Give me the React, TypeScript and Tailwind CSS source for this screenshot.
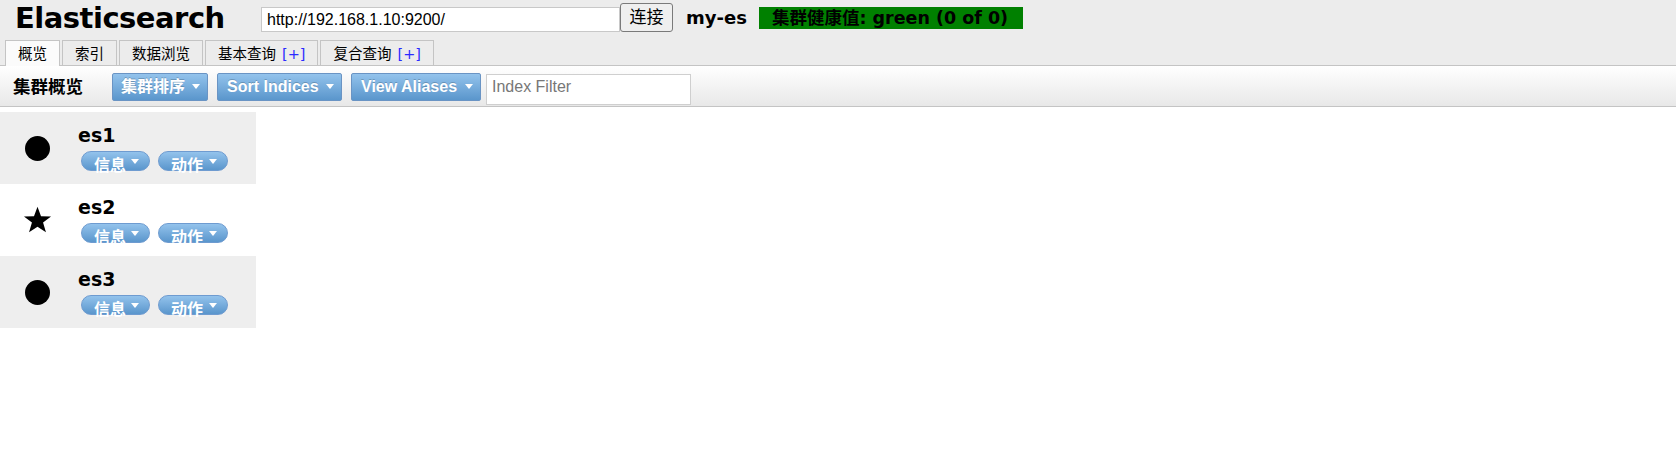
import React from "react";

const verdana = { fontFamily: '"DejaVu Sans", "Noto Sans CJK SC", sans-serif' };
const arial = { fontFamily: '"Liberation Sans", "Noto Sans CJK SC", sans-serif' };
const cjk = { fontFamily: '"Noto Sans CJK SC", sans-serif' };

const tabs = [
  { label: "概览", plus: false, active: true },
  { label: "索引", plus: false, active: false },
  { label: "数据浏览", plus: false, active: false },
  { label: "基本查询", plus: true, active: false },
  { label: "复合查询", plus: true, active: false },
];

const nodes = [
  { name: "es1", master: false },
  { name: "es2", master: true },
  { name: "es3", master: false },
];

function Caret() {
  return (
    <span className="inline-block w-0 h-0 border-l-[4px] border-r-[4px] border-t-[5px] border-l-transparent border-r-transparent border-t-white" />
  );
}

function ToolButton({ label, width, cn }: { label: string; width: string; cn?: boolean }) {
  return (
    <button
      className={`flex items-center justify-between h-[28px] ${width} ${
        cn ? "pl-[8px] text-[16px]" : "pl-[9px] text-[16px]"
      } pr-[7px] rounded-[2px] border border-[#6a94c4] bg-gradient-to-b from-[#93c3ec] to-[#5a96cc] text-white font-bold [text-shadow:0_-1px_0_rgba(0,0,0,0.2)]`}
      style={arial}
    >
      <span>{label}</span>
      <Caret />
    </button>
  );
}

function PillButton({ label, width }: { label: string; width: string }) {
  return (
    <button
      className={`flex items-center justify-between h-[20px] ${width} pl-[12px] pr-[10px] rounded-full border border-[#6e9bd0] bg-gradient-to-b from-[#93c3ec] to-[#5a96cc] text-white font-bold text-[16px] leading-none`}
      style={cjk}
    >
      <span className="mt-[5px]">{label}</span>
      <Caret />
    </button>
  );
}

function Star() {
  return (
    <svg width="29" height="28" viewBox="0 0 24 23">
      <path d="M12 0.5 L14.9 8.3 L23.2 8.5 L16.6 13.6 L19 21.7 L12 17 L5 21.7 L7.4 13.6 L0.8 8.5 L9.1 8.3 Z" fill="#000" />
    </svg>
  );
}

export default function App() {
  return (
    <div className="w-[1676px] h-[476px] bg-white text-black" style={verdana}>
      {/* Header */}
      <div className="bg-[#ececec]">
        <div className="flex items-start h-[40px] pl-[15px]">
          <h1 className="w-[246px] text-[29px] font-bold leading-[30px] mt-[3px] tracking-[-0.5px]">Elasticsearch</h1>
          <input
            className="mt-[7px] w-[359px] h-[25px] border border-[#c8c8c8] bg-white px-[5px] text-[16px] text-black outline-none"
            style={arial}
            defaultValue="http://192.168.1.10:9200/"
          />
          <button
            className="mt-[3px] w-[53px] h-[29px] border border-[#7a7a7a] rounded-[3px] bg-[#efefef] text-[17px] leading-none"
            style={arial}
          >
            连接
          </button>
          <span className="ml-[13px] mt-[6px] text-[18px] font-bold leading-[24px]">my-es</span>
          <span className="ml-[12px] mt-[7px] h-[22px] w-[264px] bg-[#008000] pl-[13px] text-[17.5px] font-bold leading-[22px] whitespace-nowrap">
            集群健康值: green (0 of 0)
          </span>
        </div>
        {/* Tabs */}
        <div className="flex items-end gap-[2px] pl-[5px] h-[25px]">
          {tabs.map((t) => (
            <div
              key={t.label}
              className={`h-[25px] px-[12px] border border-b-0 border-[#c4c4c4] text-[14.5px] leading-[24px] whitespace-nowrap ${
                t.active ? "bg-[#fbfbfb] h-[26px] -mb-px relative z-10" : "bg-[#ececec]"
              }`}
              style={cjk}
            >
              {t.label}
              {t.plus && <span className="ml-[6px] text-[#2b2bff]" style={verdana}>[+]</span>}
            </div>
          ))}
        </div>
      </div>

      {/* Toolbar */}
      <div className="flex items-center h-[42px] border-t border-b border-[#c4c4c4] bg-gradient-to-b from-white to-[#e8e8e8] pl-[13px]">
        <span className="w-[99px] text-[17.5px] font-bold" style={cjk}>
          集群概览
        </span>
        <div className="flex items-center gap-[9px] mt-[1px]">
          <ToolButton label="集群排序" width="w-[96px]" cn />
          <ToolButton label="Sort Indices" width="w-[125px]" />
          <ToolButton label="View Aliases" width="w-[130px]" />
        </div>
        <input
          className="ml-[5px] mt-[7px] w-[205px] h-[31px] border border-[#cfcfcf] bg-white px-[5px] pb-[5px] text-[16px] placeholder:text-[#777] outline-none"
          style={arial}
          placeholder="Index Filter"
        />
      </div>

      {/* Nodes */}
      <div className="mt-[5px] w-[256px]">
        {nodes.map((n, i) => (
          <div key={n.name} className={`flex h-[72px] ${i % 2 === 0 ? "bg-[#eeeeee]" : "bg-white"}`}>
            <div className="w-[78px] flex items-center justify-center pr-[4px]">
              {n.master ? <Star /> : <span className="block w-[25px] h-[25px] rounded-full bg-black" />}
            </div>
            <div className="flex flex-col pt-[12px]">
              <span className="text-[19px] font-bold leading-[23px]">{n.name}</span>
              <div className="flex gap-[8px] mt-[4px] ml-[3px]">
                <PillButton label="信息" width="w-[69px]" />
                <PillButton label="动作" width="w-[70px]" />
              </div>
            </div>
          </div>
        ))}
      </div>
    </div>
  );
}
